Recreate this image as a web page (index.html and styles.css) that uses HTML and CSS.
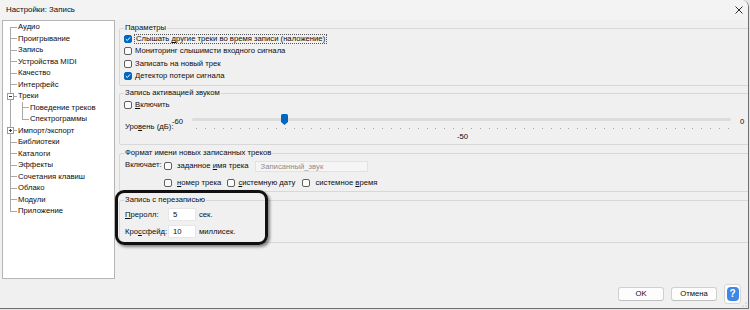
FILE: index.html
```html
<!DOCTYPE html>
<html lang="ru">
<head>
<meta charset="utf-8">
<title>Настройки: Запись</title>
<link rel="stylesheet" href="styles.css">
</head>
<body>
<div class="window">
  <div class="titlebar">
    <span class="title">Настройки: Запись</span>
    <svg class="close" width="8" height="8" viewBox="0 0 8 8"><path d="M0.5 0.5 L7.5 7.5 M7.5 0.5 L0.5 7.5" stroke="#2b2b2b" stroke-width="1" fill="none"/></svg>
  </div>
  <div class="body">
    <div class="tree">
      <ul class="tree-root">
        <li><div class="node">Аудио</div></li>
        <li><div class="node">Проигрывание</div></li>
        <li><div class="node">Запись</div></li>
        <li><div class="node">Устройства MIDI</div></li>
        <li><div class="node">Качество</div></li>
        <li><div class="node">Интерфейс</div></li>
        <li><div class="node"><span class="exp"></span>Треки</div>
          <ul class="sub">
            <li><div class="node">Поведение треков</div></li>
            <li><div class="node">Спектрограммы</div></li>
          </ul>
        </li>
        <li><div class="node"><span class="exp plus"></span>Импорт/экспорт</div></li>
        <li><div class="node">Библиотеки</div></li>
        <li><div class="node">Каталоги</div></li>
        <li><div class="node">Эффекты</div></li>
        <li><div class="node">Сочетания клавиш</div></li>
        <li><div class="node">Облако</div></li>
        <li><div class="node">Модули</div></li>
        <li><div class="node">Приложение</div></li>
      </ul>
    </div>
    <div class="main">
      <section class="group g1">
        <div class="gtitle">Параметры</div>
        <div class="cb-row"><span class="cb on"><svg width="6" height="6" viewBox="0 0 6 6"><path d="M0.8 3.1 L2.3 4.5 L5.2 1.3" stroke="#fff" stroke-width="1" fill="none"/></svg></span><span class="focus">Слышать <u>д</u>ругие треки во время записи (наложение)</span></div>
        <div class="cb-row"><span class="cb"></span><span>Мониторинг слышимсти входного сигнала</span></div>
        <div class="cb-row"><span class="cb"></span><span>Записать на новый трек</span></div>
        <div class="cb-row"><span class="cb on"><svg width="6" height="6" viewBox="0 0 6 6"><path d="M0.8 3.1 L2.3 4.5 L5.2 1.3" stroke="#fff" stroke-width="1" fill="none"/></svg></span><span>Детектор потери сигнала</span></div>
      </section>
      <section class="group g2">
        <div class="gtitle">Запись активацией звуком</div>
        <div class="cb-row first"><span class="cb"></span><span><u>В</u>ключить</span></div>
        <div class="level">
          <span class="lvl-label">Уро<u>в</u>ень (дБ):</span>
          <span class="lvl-min">-60</span>
          <div class="slider">
            <div class="track"></div>
            <svg class="thumb" width="7" height="11" viewBox="0 0 7 11"><path d="M0 1.5 Q0 0 1.5 0 H5.5 Q7 0 7 1.5 V8 L3.5 11 L0 8 Z" fill="#0067c0"/></svg>
            <div class="ticks"></div>
            <span class="lvl-mid">-50</span>
          </div>
          <span class="lvl-max">0</span>
        </div>
      </section>
      <section class="group g3">
        <div class="gtitle">Формат имени новых записанных треков</div>
        <div class="fmt">
          <span class="fmt-label">Включает:</span>
          <div class="fmt-row">
            <span class="cb"></span><span class="opt">заданное <u>и</u>мя трека</span>
            <span class="txt-disabled">Записанный_звук</span>
          </div>
          <div class="fmt-row second">
            <span class="cb"></span><span class="opt"><u>н</u>омер трека</span>
            <span class="cb sp"></span><span class="opt tight"><u>с</u>истемную дату</span>
            <span class="cb sp2"></span><span class="opt">системное <u>в</u>ремя</span>
          </div>
        </div>
      </section>
      <section class="group g4">
        <div class="gtitle">Запись с перезаписью</div>
        <div class="field first">
          <span class="f-label"><u>П</u>реролл:</span>
          <span class="num">5</span>
          <span class="unit">сек.</span>
        </div>
        <div class="field">
          <span class="f-label">Кро<u>с</u>сфейд:</span>
          <span class="num">10</span>
          <span class="unit">миллисек.</span>
        </div>
      </section>
    </div>
  </div>
  <div class="buttons">
    <button class="btn">OK</button>
    <button class="btn">Отмена</button>
    <button class="help"><span class="q">?</span></button>
  </div>
  <div class="annot"></div>
  <svg class="grip" width="5" height="5" viewBox="0 0 5 5"><circle cx="4" cy="1" r="0.6" fill="#9a9a9a"/><circle cx="4" cy="4" r="0.6" fill="#9a9a9a"/><circle cx="1" cy="4" r="0.6" fill="#9a9a9a"/></svg>
</div>
</body>
</html>
```
FILE: styles.css
```css
html, body {
  margin: 0;
  background: #e6e6e6;
}
body {
  font-family: "Liberation Sans", Arial, sans-serif;
  font-size: 7.7px;
  color: #0d0d0d;
}
u { text-decoration-thickness: 1px; text-underline-offset: 1px; }

.window {
  width: 748px;
  height: 308px;
  background: #f0f0f0;
  border-right: 1px solid #707070;
  border-bottom: 1px solid #707070;
  border-top-right-radius: 7px;
  position: relative;
  display: flex;
  flex-direction: column;
  overflow: hidden;
}

.titlebar {
  height: 20px;
  flex: none;
  display: flex;
  align-items: center;
  justify-content: space-between;
  padding: 0 5px 0 6px;
  background: #f3f3f3;
}
.title { line-height: 10px; font-size: 7.9px; }
.close { display: block; margin-top: -1px; }

.body {
  display: flex;
  gap: 4px;
  padding: 0 2px;
  height: 259px;
  flex: none;
}

/* tree */
.tree {
  width: 113px;
  flex: none;
  box-sizing: border-box;
  border: 1px solid #b5b5b5;
  background: #fff;
}
.tree ul { list-style: none; margin: 0; padding: 0; }
.tree li { position: relative; }
.node {
  position: relative;
  height: 11.53px;
  line-height: 11.53px;
  padding-left: 15px;
  white-space: nowrap;
}
.node::before {
  content: "";
  position: absolute;
  left: 7px;
  top: 5.5px;
  width: 7px;
  height: 1px;
  background: #a9a9a9;
}
.tree-root > li::after {
  content: "";
  position: absolute;
  left: 7px;
  top: 0;
  bottom: 0;
  width: 1px;
  background: #a9a9a9;
}
.tree-root > li:first-child::after { top: 5.5px; }
.tree-root > li:last-child::after { bottom: auto; height: 6px; }
.sub .node { padding-left: 27px; }
.sub .node::before { left: 19px; width: 7px; }
.sub li::after {
  content: "";
  position: absolute;
  left: 19px;
  top: 0;
  bottom: 0;
  width: 1px;
  background: #a9a9a9;
}
.sub li:last-child::after { bottom: auto; height: 6px; }
.exp {
  position: absolute;
  left: 4px;
  top: 2.5px;
  width: 7px;
  height: 7px;
  box-sizing: border-box;
  border: 1px solid #9a9a9a;
  background: #fff;
  z-index: 1;
}
.exp::before {
  content: "";
  position: absolute;
  left: 1px;
  top: 2px;
  width: 3px;
  height: 1px;
  background: #333;
}
.exp.plus::after {
  content: "";
  position: absolute;
  left: 2px;
  top: 1px;
  width: 1px;
  height: 3px;
  background: #333;
}

/* main column */
.main {
  flex: 1;
  display: flex;
  flex-direction: column;
  padding-top: 8px;
}
.group {
  border: 1px solid #d8d8d8;
  border-radius: 2px;
  padding: 0 4px;
}
.gtitle {
  margin-top: -6px;
  height: 10px;
  line-height: 10px;
  width: fit-content;
  padding: 0 1px;
  background: #f0f0f0;
}
.g1 { padding-bottom: 3px; }
.g2 { margin-top: 7px; padding-bottom: 2px; }
.g3 { margin-top: 8px; padding-bottom: 2px; }
.g4 { margin-top: 8px; padding-bottom: 4px; }

.cb-row {
  display: flex;
  align-items: center;
  gap: 3px;
  height: 12.3px;
  line-height: 10px;
  white-space: nowrap;
}
.cb-row.first { margin-top: 1px; height: 12px; }
.cb {
  width: 8px;
  height: 8px;
  flex: none;
  box-sizing: border-box;
  border: 1px solid #5f5f5f;
  border-radius: 2px;
  background: #fbfbfb;
  display: flex;
  align-items: center;
  justify-content: center;
}
.cb.on { background: #0067c0; border-color: #0067c0; }
.cb svg { display: block; }
.focus {
  outline: 1px dotted #555;
  padding: 0 1px;
  line-height: 8px;
}

/* level slider */
.level {
  display: grid;
  grid-template-columns: 48px 20px 539px auto;
  height: 31px;
  line-height: 10px;
}
.lvl-label { margin: 11px 0 0 1px; white-space: nowrap; }
.lvl-min { margin-top: 6px; }
.lvl-max { margin-top: 6px; padding-left: 9px; }
.slider { position: relative; display: flex; flex-direction: column; }
.track {
  margin-top: 7px;
  height: 3px;
  border-radius: 2px;
  background: #dcdcdc;
}
.thumb { position: absolute; left: 89px; top: 3px; }
.ticks {
  margin: 7px 0 0 4px;
  width: 533px;
  height: 1px;
  background: repeating-linear-gradient(to right, #a3a3a3 0 1px, transparent 1px 8.866px);
}
.lvl-mid { margin: 3px 0 0 265px; }

/* format */
.fmt {
  display: grid;
  grid-template-columns: 40px auto;
  line-height: 10px;
}
.fmt-label { margin: 2px 0 0 1px; height: 12px; line-height: 10px; }
.fmt-row {
  display: flex;
  align-items: center;
  height: 12px;
  white-space: nowrap;
  margin-top: 2px;
}
.fmt-row.second { grid-column: 2; margin-top: 5px; }
.opt { margin-left: 5px; flex: none; }
.opt.tight { margin-left: 3px; }
.cb.sp { margin-left: 6px; }
.cb.sp2 { margin-left: 7px; }
.txt-disabled {
  flex: none;
  margin-left: 6px;
  width: 113px;
  height: 11px;
  box-sizing: border-box;
  border: 1px solid #e2e2e2;
  background: #f5f5f5;
  color: #8c8c8c;
  padding-left: 5px;
  line-height: 9px;
}

/* overdub */
.field {
  display: flex;
  align-items: center;
  height: 13px;
  margin-top: 4px;
  line-height: 10px;
}
.field.first { margin-top: 3px; }
.f-label { width: 43px; margin-left: 1px; white-space: nowrap; }
.num {
  width: 28px;
  height: 13px;
  box-sizing: border-box;
  border: 1px solid #e6e6e6;
  background: #fff;
  padding-left: 4px;
  line-height: 11px;
}
.unit { margin-left: 3px; }

/* buttons */
.buttons {
  height: 29px;
  flex: none;
  display: flex;
  justify-content: flex-end;
  align-items: center;
  gap: 7px;
  padding-right: 7px;
}
.btn {
  width: 46px;
  height: 14px;
  padding: 0;
  box-sizing: border-box;
  border: 1px solid #d0d0d0;
  border-bottom-color: #bdbdbd;
  border-radius: 3px;
  background: #fdfdfd;
  font: inherit;
  color: #0d0d0d;
  line-height: 12px;
}
.help {
  width: 17px;
  height: 20px;
  padding: 0;
  box-sizing: border-box;
  border: 1px solid #d6d6d6;
  border-radius: 3px;
  background: #fdfdfd;
  display: flex;
  align-items: center;
  justify-content: center;
}
.q {
  width: 12px;
  height: 14px;
  border-radius: 4px;
  background: #3d87e6;
  color: #fff;
  font-family: "Liberation Sans", Arial, sans-serif;
  font-weight: bold;
  font-size: 10px;
  line-height: 14px;
  text-align: center;
}

/* annotation overlay */
.annot {
  position: absolute;
  left: 115px;
  top: 190px;
  width: 153px;
  height: 55px;
  box-sizing: border-box;
  border: 3px solid #111;
  border-radius: 9px;
  box-shadow: 2px 2px 3px rgba(0, 0, 0, 0.45);
}
.grip { position: absolute; right: 1px; bottom: 1px; }
```
